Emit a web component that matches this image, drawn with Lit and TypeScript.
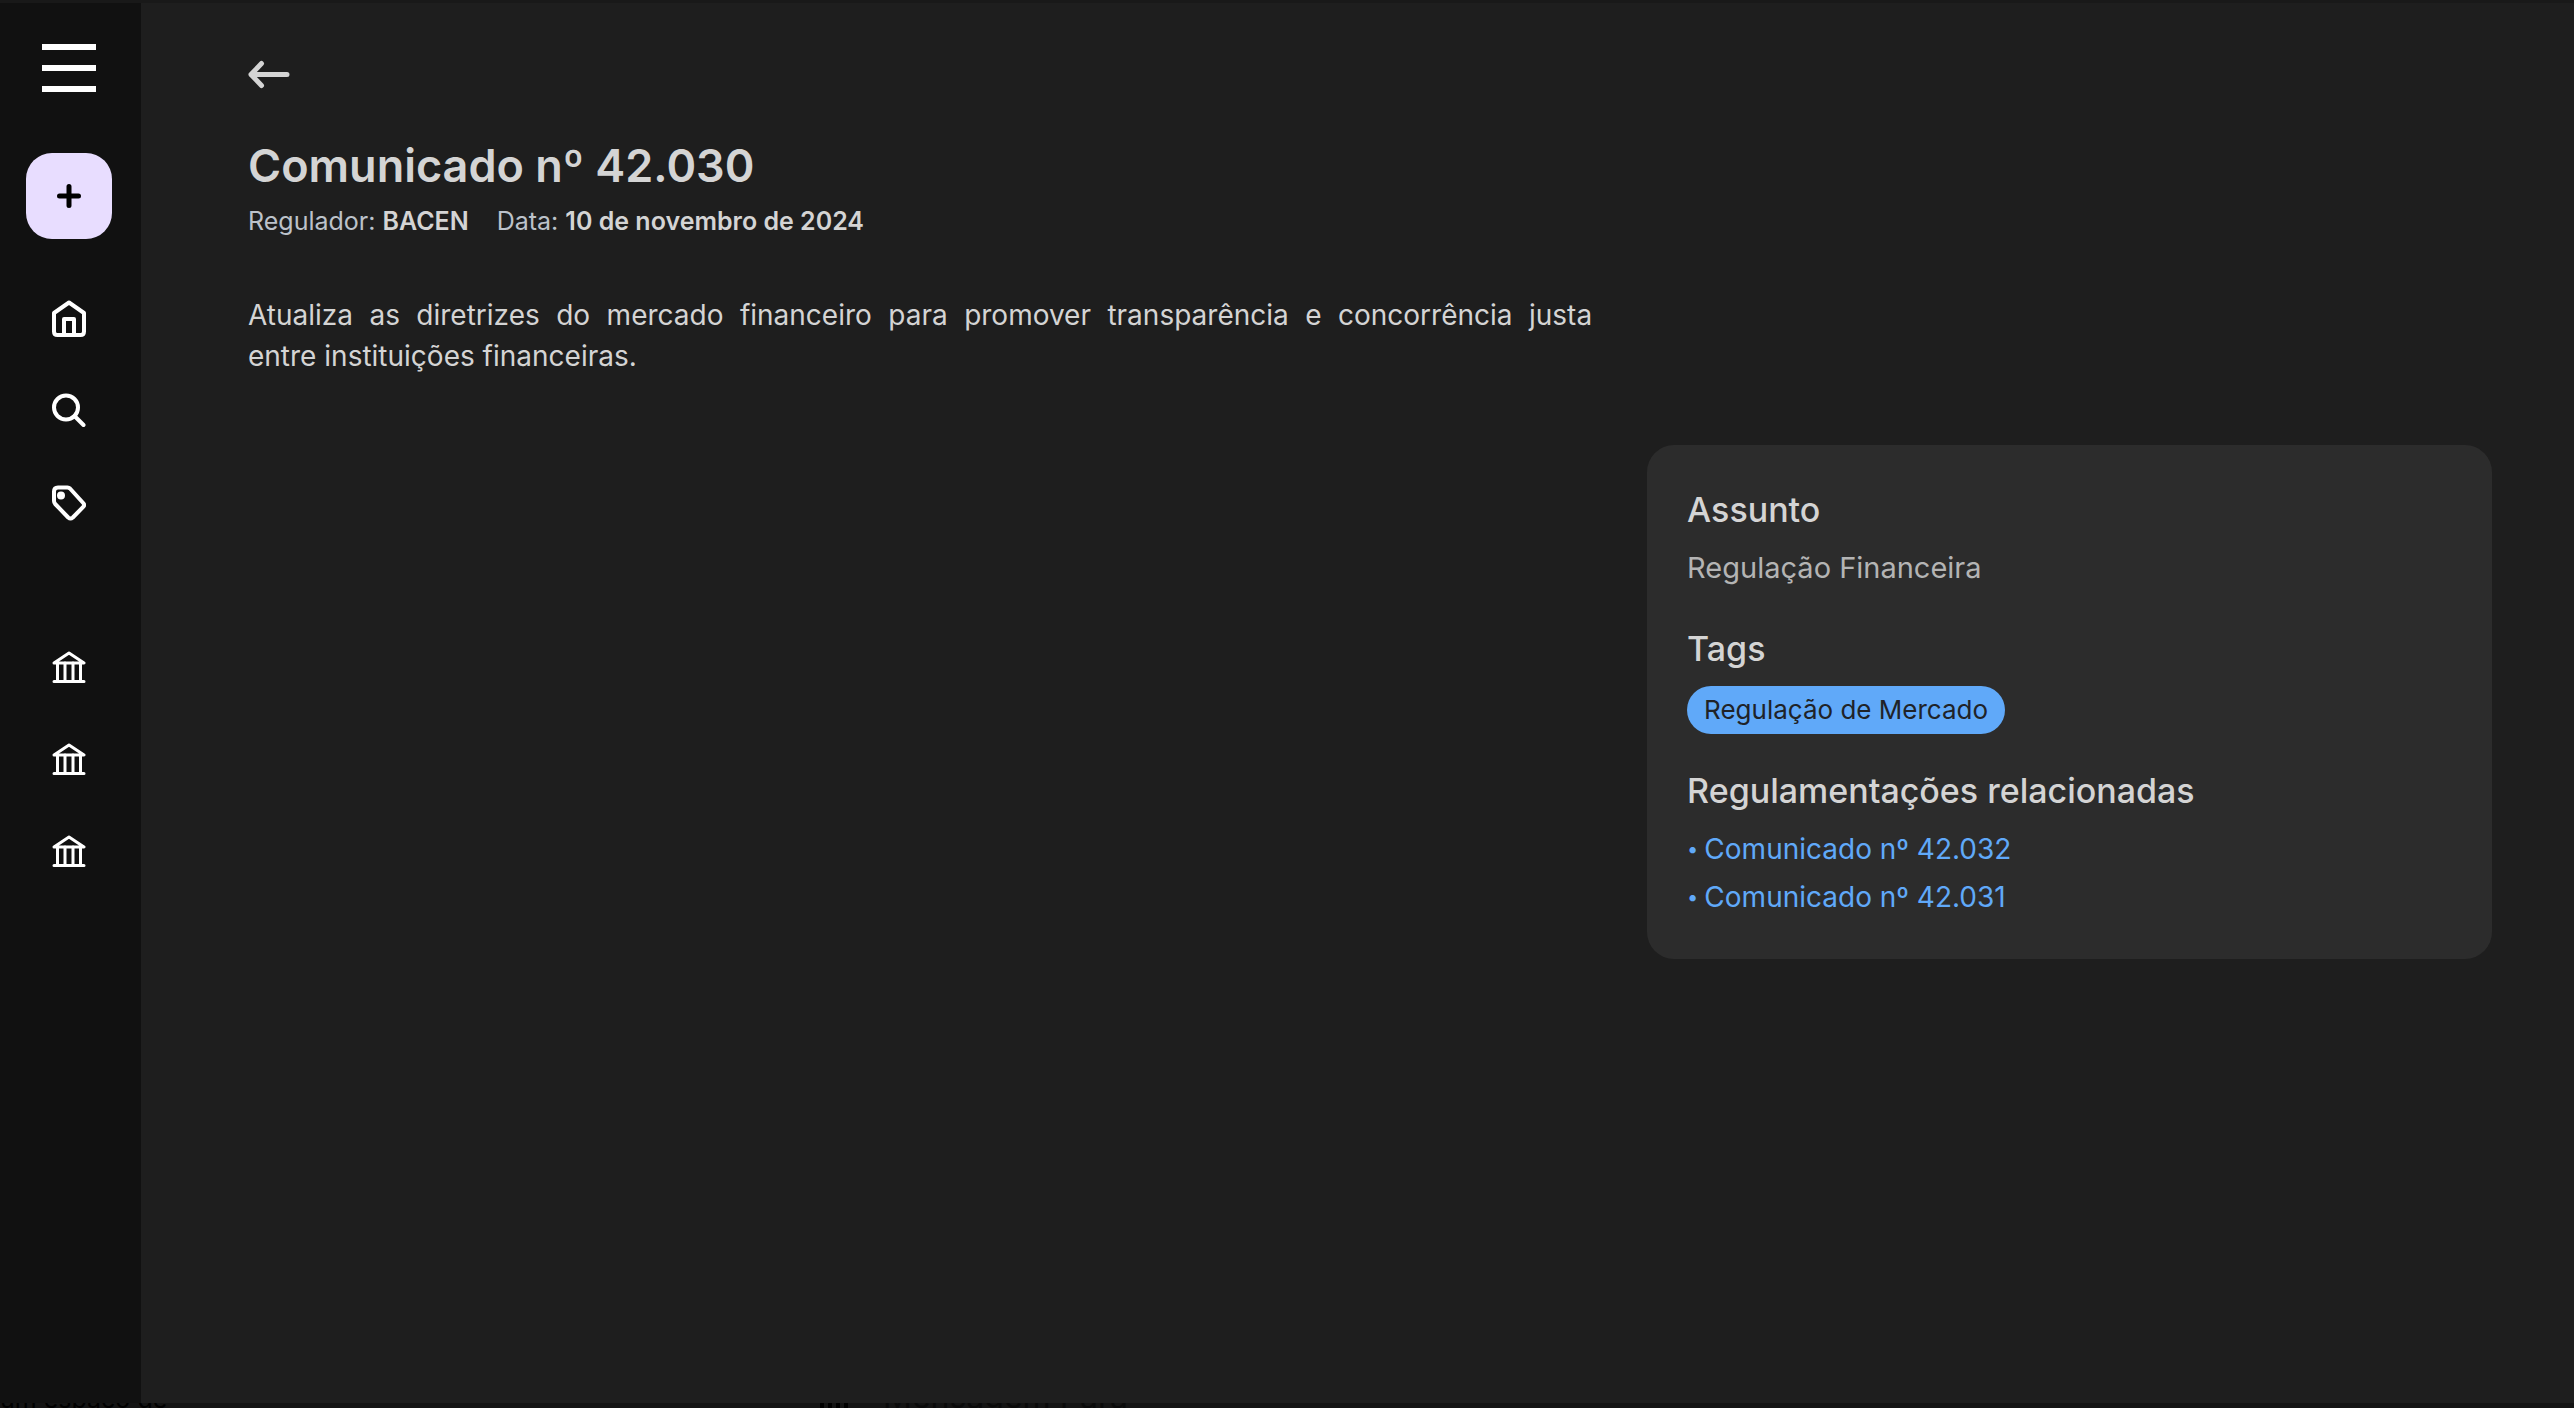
import { LitElement, html, css, svg } from "lit";
import { customElement, property } from "lit/decorators.js";

const glyphs = {
  home: svg`<path d="M2 12.500V31Q2 34.500 5.500 34.500H28.500Q32 34.500 32 31V12.500L17 2Z"/><path d="M12 34V18.500H22V34"/>`,
  search: svg`<circle cx="14" cy="15" r="12"/><path d="M22.500 23.500L31.500 32.500"/>`,
  tag: svg`<path d="M2 7Q2 3 6 3H15.500Q17 3 18 4L31.200 18.500Q33 20.500 31.200 22.400L20.800 33Q18.500 35 16.200 33L3.200 19.500Q2 18.200 2 16.500Z"/><circle cx="9" cy="11" r="2" fill="currentColor"/>`,
};

@customElement("app-rail")
export class AppRail extends LitElement {
  static styles = css`
    :host {
      display: flex;
      flex-direction: column;
      align-items: center;
      box-sizing: border-box;
      background: #111;
      color: #fff;
      padding: 37px 3px 0 0;
    }
    button,
    a {
      display: flex;
      align-items: center;
      justify-content: center;
      border: 0;
      padding: 0;
      background: none;
      color: inherit;
      cursor: pointer;
    }
    .menu {
      width: 64px;
      height: 56px;
    }
    .add {
      width: 86px;
      height: 86px;
      margin-top: 57px;
      border-radius: 26px;
      background: #e8ddff;
      color: #000;
    }
    nav {
      display: flex;
      flex-direction: column;
    }
    .pages {
      margin-top: 34px;
    }
    .regulators {
      margin-top: 72px;
    }
    nav a {
      width: 86px;
      height: 92px;
    }
    svg {
      display: block;
      fill: none;
      stroke: currentColor;
      stroke-linecap: round;
      stroke-linejoin: round;
    }
  `;

  private page(name: keyof typeof glyphs, label: string) {
    return html`<a href="#${name}" aria-label=${label}>
      <svg width="34" height="38" viewBox="0 0 34 37" stroke-width="4">${glyphs[name]}</svg>
    </a>`;
  }

  render() {
    return html`
      <button class="menu" aria-label="Menu">
        <svg width="54" height="50" viewBox="0 0 54 50" stroke-width="6">
          <path stroke-linecap="butt" d="M0 4H54M0 25H54M0 46H54" />
        </svg>
      </button>
      <button class="add" aria-label="Adicionar">
        <svg width="24" height="24" viewBox="0 0 24 24" stroke-width="5">
          <path d="M12 2.500V21.500M2.500 12H21.500" />
        </svg>
      </button>
      <nav class="pages" aria-label="Principal">
        ${this.page("home", "Início")} ${this.page("search", "Buscar")} ${this.page("tag", "Tags")}
      </nav>
      <nav class="regulators" aria-label="Reguladores">
        ${[1, 2, 3].map(
          (n) => html`<a href="#regulador-${n}" aria-label="Regulador ${n}">
            <svg width="34" height="32" viewBox="0 0 34 32" stroke-width="3">
              <path d="M2 12L17 2L32 12Z" />
              <path d="M5.500 12V29M13 12V29M21 12V29M28.500 12V29M2 30.500H32" />
            </svg>
          </a>`
        )}
      </nav>
    `;
  }
}

@customElement("related-card")
export class RelatedCard extends LitElement {
  @property() subject = "";
  @property({ attribute: false }) tags: string[] = [];
  @property({ attribute: false }) related: string[] = [];

  static styles = css`
    :host {
      display: flex;
      flex-direction: column;
      gap: 33px;
      box-sizing: border-box;
      background: #2c2c2c;
      border-radius: 27px;
      padding: 41px 40px 38px;
    }
    h2 {
      margin: 0;
      font-size: 34px;
      line-height: 48px;
      font-weight: 500;
      color: #d4d4d4;
    }
    p {
      margin: 10px 0 0;
      font-size: 29px;
      line-height: 48px;
      color: #b4b4b4;
    }
    .tags {
      display: flex;
      flex-wrap: wrap;
      gap: 12px;
      margin-top: 13px;
    }
    .tag {
      background: #60a9f9;
      color: #1f2328;
      border-radius: 24px;
      padding: 0 17px;
      font-size: 26px;
      line-height: 48px;
    }
    ul {
      list-style: none;
      margin: 10px 0 0;
      padding: 0;
      font-size: 28px;
      line-height: 48px;
      color: #60a9f9;
    }
    a {
      display: flex;
      gap: 6px;
      color: inherit;
      text-decoration: none;
    }
    .dot {
      font-size: 20px;
    }
  `;

  render() {
    return html`
      <section>
        <h2>Assunto</h2>
        <p>${this.subject}</p>
      </section>
      <section>
        <h2>Tags</h2>
        <div class="tags">${this.tags.map((t) => html`<span class="tag">${t}</span>`)}</div>
      </section>
      <section>
        <h2>Regulamentações relacionadas</h2>
        <ul>
          ${this.related.map(
            (r) => html`<li><a href="#"><span class="dot">•</span><span>${r}</span></a></li>`
          )}
        </ul>
      </section>
    `;
  }
}

@customElement("app-root")
export class AppRoot extends LitElement {
  static styles = css`
    :host {
      display: flex;
      flex-direction: column;
      box-sizing: border-box;
      min-height: 100vh;
      border-top: 3px solid #191919;
      background: #1e1e1e;
      color: #d4d4d4;
      font-family: Inter, "Liberation Sans", sans-serif;
    }
    .shell {
      flex: 1;
      display: grid;
      grid-template-columns: 141px 1fr;
    }
    main {
      padding: 54px 82px 0 107px;
    }
    .back {
      display: block;
      border: 0;
      padding: 0;
      background: none;
      color: inherit;
      cursor: pointer;
    }
    .back svg {
      display: block;
    }
    h1 {
      margin: 41px 0 0;
      font-size: 45px;
      line-height: 68px;
      font-weight: 600;
    }
    .meta {
      display: flex;
      gap: 28px;
      font-size: 25px;
      line-height: 42px;
      color: #bcc2ca;
    }
    .meta strong {
      color: #d4d4d4;
      font-weight: 600;
    }
    .columns {
      display: grid;
      grid-template-columns: 35fr 22fr;
      column-gap: 55px;
      align-items: start;
      margin-top: 53px;
    }
    .summary {
      margin: 0;
      font-size: 28px;
      line-height: 41px;
      text-align: justify;
    }
    related-card {
      margin-top: 150px;
    }
    .under {
      display: flex;
      align-items: flex-end;
      height: 5px;
      overflow: hidden;
      background: #141414;
      font-size: 25px;
      line-height: 18px;
      color: #000;
    }
    .under span {
      flex: 0 0 820px;
    }
    .bars {
      flex: none;
      width: 28px;
      height: 5px;
      margin-right: 35px;
      background: repeating-linear-gradient(90deg, #000 0 4px, #141414 4px 8px);
    }
    .under .dim {
      flex: 1;
      font-size: 32px;
      line-height: 23px;
      color: #0a0a0a;
    }
  `;

  render() {
    return html`
      <div class="shell">
        <app-rail></app-rail>
        <main>
          <button class="back" aria-label="Voltar">
            <svg width="42" height="34" viewBox="0 0 42 34" fill="none" stroke="currentColor" stroke-width="5" stroke-linecap="round" stroke-linejoin="round">
              <path d="M13.500 6.500L3 17.500L13.500 28.500M3 17.500H39" />
            </svg>
          </button>
          <h1>Comunicado nº 42.030</h1>
          <div class="meta">
            <span>Regulador: <strong>BACEN</strong></span>
            <span>Data: <strong>10 de novembro de 2024</strong></span>
          </div>
          <div class="columns">
            <p class="summary">
              Atualiza as diretrizes do mercado financeiro para promover transparência e concorrência justa
              entre&nbsp;instituições financeiras.
            </p>
            <related-card
              subject="Regulação Financeira"
              .tags=${["Regulação de Mercado"]}
              .related=${["Comunicado nº 42.032", "Comunicado nº 42.031"]}
            ></related-card>
          </div>
        </main>
      </div>
      <div class="under">
        <span>um espaço de</span>
        <div class="bars"></div>
        <span class="dim">Mensagem Para</span>
      </div>
    `;
  }
}
